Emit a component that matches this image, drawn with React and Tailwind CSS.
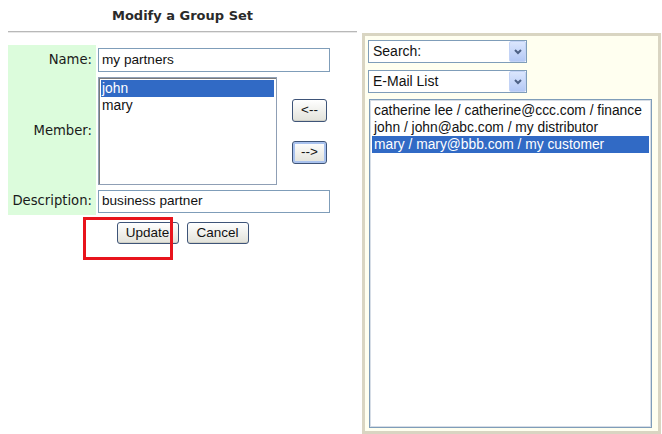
import React from "react";

const arial = "font-['Liberation_Sans',Arial,sans-serif]";

function Chevron() {
  return (
    <div className="w-[17px] h-[21px] rounded-[2px] bg-gradient-to-b from-[#dbe6fd] to-[#b4c9f5] border border-[#c3d3f6] flex items-center justify-center">
      <svg width="8" height="6" viewBox="0 0 8 6">
        <path d="M1 1 L4 4 L7 1" fill="none" stroke="#4d6185" strokeWidth="2" />
      </svg>
    </div>
  );
}

function Select({ label, className = "" }) {
  return (
    <div className={`w-[159px] h-[23px] border border-[#7f9db9] bg-white flex items-center ${className}`}>
      <div className={`flex-1 px-[4px] text-[14px] text-[#111] ${arial}`}>{label}</div>
      <Chevron />
    </div>
  );
}

function XPButton({ children, className = "", focus = false }) {
  return (
    <div
      className={`rounded-[3px] border border-[#3e5478] bg-gradient-to-b from-[#ffffff] to-[#e2e2da] flex items-center justify-center text-[13.5px] text-[#111] ${arial} ${
        focus ? "shadow-[inset_0_0_0_2px_#a9c2ee]" : "shadow-[inset_0_-1px_0_#d0d0c6]"
      } ${className}`}
    >
      {children}
    </div>
  );
}

export default function App() {
  const green = "bg-[#dcfcdc]";
  return (
    <div className="w-[662px] h-[434px] bg-white flex font-['DejaVu_Sans',Verdana,sans-serif] text-[#1a1a1a] overflow-hidden">
      <div className="w-[349px] ml-[8px] flex flex-col relative">
        <div className="h-[31px] flex items-center justify-center text-[13px] font-bold text-[#2a2a2a]">
          Modify a Group Set
        </div>
        <div className="h-[2px] border-t border-t-[#b8b8b8] border-b border-b-[#e8e8e8]" />
        <div className="mt-[12px] grid grid-cols-[88px_1fr] gap-x-[2px]">
          <div className={`${green} h-[30px] flex items-center justify-end pr-[4px] text-[13.2px]`}>Name:</div>
          <div className="h-[30px] flex items-center">
            <div className={`w-[232px] h-[24px] border border-[#7f9db9] bg-white px-[3px] flex items-center text-[13.6px] text-[#111] ${arial}`}>
              my partners
            </div>
          </div>

          <div className={`${green} h-[112px] flex items-center justify-end pr-[4px] text-[13.2px]`}>Member:</div>
          <div className="h-[112px] flex items-center">
            <div className={`w-[179px] h-[108px] border border-[#8f9fb5] shadow-[inset_1px_1px_0_#7a7a7a] bg-white p-[2px] text-[13.8px] text-[#111] ${arial}`}>
              <div className="h-[17px] leading-[17px] bg-[#316ac5] text-white px-[1px]">john</div>
              <div className="h-[17px] leading-[17px] px-[1px]">mary</div>
            </div>
            <div className="ml-[15px] flex flex-col gap-[19px]">
              <XPButton className="w-[35px] h-[23px]">&lt;--</XPButton>
              <XPButton className="w-[35px] h-[23px]" focus>--&gt;</XPButton>
            </div>
          </div>

          <div className={`${green} h-[28px] flex items-center justify-end pr-[4px] text-[13.2px]`}>Description:</div>
          <div className="h-[28px] flex items-center">
            <div className={`w-[232px] h-[23px] border border-[#7f9db9] bg-white px-[3px] flex items-center text-[13.6px] text-[#111] ${arial}`}>
              business partner
            </div>
          </div>
        </div>
        <div className="mt-[7px] flex justify-center gap-[8px]">
          <XPButton className="w-[62px] h-[22px]">Update</XPButton>
          <XPButton className="w-[62px] h-[22px]">Cancel</XPButton>
        </div>
        <div className="absolute left-[75px] top-[217px] w-[90px] h-[43px] border-[3px] border-[#e8141c]" />
      </div>

      <div className="ml-[5px] mt-[33px] w-[299px] h-[401px] border-[3px] border-[#d9d5c2] bg-[#fffff0] pl-[3px] pt-[4px] flex flex-col">
        <Select label="Search:" />
        <Select label="E-Mail List" className="mt-[7px]" />
        <div className={`ml-[1px] mt-[6px] w-[283px] h-[329px] border border-[#7f9db9] shadow-[inset_0_0_0_1px_#d6dde6] bg-white p-[2px] text-[13.8px] text-[#111] ${arial}`}>
          <div className="h-[17px] leading-[17px] px-[2px] whitespace-nowrap">catherine lee / catherine@ccc.com / finance</div>
          <div className="h-[17px] leading-[17px] px-[2px] whitespace-nowrap">john / john@abc.com / my distributor</div>
          <div className="h-[17px] leading-[17px] px-[2px] whitespace-nowrap bg-[#316ac5] text-white">mary / mary@bbb.com / my customer</div>
        </div>
      </div>
    </div>
  );
}
